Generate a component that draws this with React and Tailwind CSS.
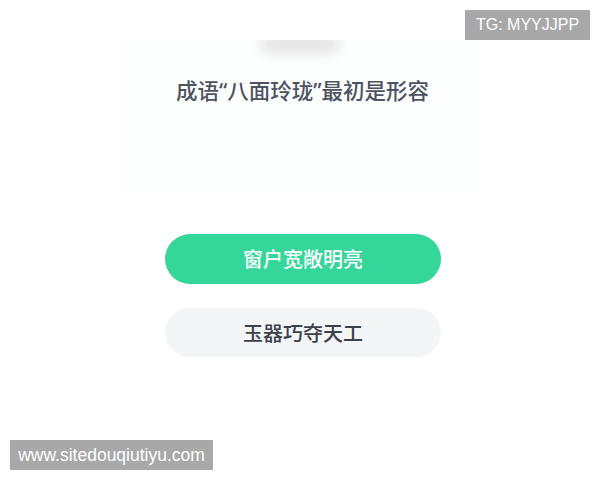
export default function App() {
  return (
    <div className="relative w-[600px] h-[480px] bg-white overflow-hidden" style={{ fontFamily: '"Noto Sans CJK SC", "Noto Sans", sans-serif' }}>
      <div className="pt-[40px] flex flex-col items-center">
        {/* faint question card */}
        <div className="relative w-[360px] h-[155px] bg-[#fdfefe] flex flex-col items-center">
          <div className="absolute -top-[6px] left-1/2 -translate-x-1/2 w-[80px] h-[20px] rounded-full bg-[#e6e6e6] blur-[6px]" />
          <div className="absolute -top-[20px] left-0 w-full h-[20px] bg-white" />
          <h1
            className="mt-[37px] ml-[5px] text-[21.5px] leading-[28px] font-medium text-[#4d5360]"
            style={{ fontFamily: '"Noto Sans", "Noto Sans CJK SC", sans-serif' }}
          >
            成语“八面玲珑”最初是形容
          </h1>
        </div>

        <div className="mt-[39px] w-[276px] flex flex-col gap-[24px] ml-[6px]">
          <button className="h-[50px] rounded-full bg-[#34d699] text-white text-[20px] font-medium">
            窗户宽敞明亮
          </button>
          <button className="h-[49px] rounded-full bg-[#f4f5f7] text-[#3c414b] text-[20px] font-medium">
            玉器巧夺天工
          </button>
        </div>
      </div>

      <div className="absolute top-[10px] left-[465px] w-[125px] h-[30px] bg-[#a8a8a8] text-white text-[16px] flex items-center justify-center" style={{ fontFamily: '"Liberation Sans", Arial, sans-serif' }}>
        TG: MYYJJPP
      </div>
      <div className="absolute top-[440px] left-[10px] w-[203px] h-[30px] bg-[#a8a8a8] text-white text-[17.5px] flex items-center justify-center" style={{ fontFamily: '"Liberation Sans", Arial, sans-serif' }}>
        www.sitedouqiutiyu.com
      </div>
    </div>
  );
}
